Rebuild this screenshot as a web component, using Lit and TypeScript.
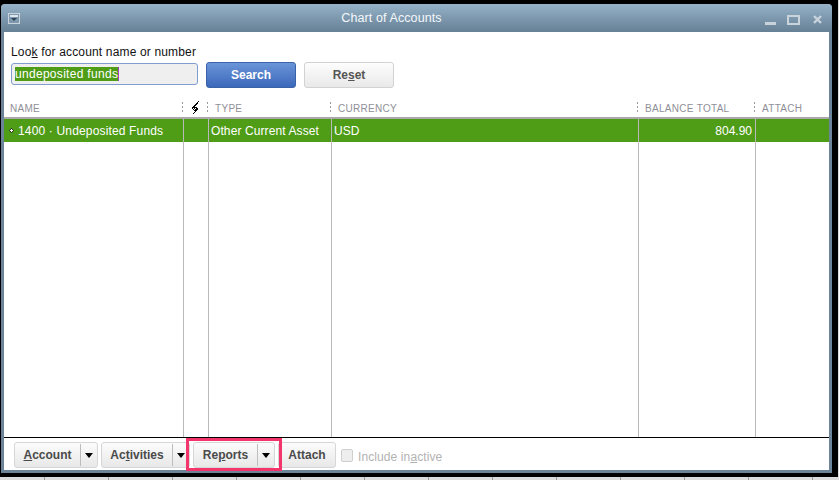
import { LitElement, html, css } from "lit";
import { customElement } from "lit/decorators.js";

@customElement("app-root")
export class AppRoot extends LitElement {
  static styles = css`
    :host { display: block; width: 839px; height: 480px; overflow: hidden; font-family: "Liberation Sans", Arial, sans-serif; }
    * { box-sizing: border-box; }
    .page { width: 839px; height: 480px; padding: 0 1px 3px 0; background-color: #dcdcdc;
      background-image: repeating-linear-gradient(90deg, transparent 0 44px, #9a9a9a 44px 45px, transparent 45px 64px); }
    .black { height: 477px; background: #000; padding: 4px 6px 4px 1px; }
    .win { height: 469px; display: flex; flex-direction: column; background: #6c8499; border-radius: 4px 4px 0 0; padding: 0 3px 3px 3px; }
    .title { height: 28px; flex: none; margin: 0 -3px; padding: 0 8px 0 7px; display: flex; align-items: center; justify-content: space-between;
      background: linear-gradient(#95b2c8, #668095); border-radius: 4px 4px 0 0; color: #fff; position: relative; }
    .title-text { position: absolute; left: 0; right: 0; top: 7px; text-align: center; font-size: 12.5px; line-height: 15px; color: #f4f7fa; padding-right: 50px; letter-spacing: .1px; }
    .sys { display: block; }
    .ctl { display: flex; align-items: center; margin: 3px 2px 0 0; }
    .ctl .min { margin: 8px 11px 0 0; }
    .ctl .max { margin-right: 13px; }
    .content { flex: 1; background: #fff; display: flex; flex-direction: column; min-height: 0; }
    .search { height: 68px; flex: none; padding: 13px 0 0 7px; }
    .label { font-size: 12px; line-height: 15px; color: #111; height: 17px; letter-spacing: .16px; }
    u { text-underline-offset: 1px; }
    .search-row { display: flex; align-items: flex-start; }
    .input { width: 187px; height: 22px; margin-top: 1px; border: 1px solid #7f9dd0; border-radius: 3px; background: #efefef; padding: 3px 3px 0; font-size: 12px; line-height: 14px; letter-spacing: .3px; }
    .sel { background: #4f9c17; color: #fff; display: inline-block; height: 14px; border-right: 1px solid #a040c0; }
    .btn-primary { width: 90px; height: 26px; margin-left: 8px; border: 1px solid #3a62a8; border-radius: 3px; background: linear-gradient(#6a95d8, #3c68bb); color: #fff; font-size: 12px; font-weight: bold; display: flex; align-items: center; justify-content: center; }
    .btn-reset { width: 90px; height: 26px; margin-left: 8px; border: 1px solid #d2d2d2; border-radius: 3px; background: linear-gradient(#fdfdfd, #e9e9e9); color: #555; font-size: 12px; font-weight: bold; display: flex; align-items: center; justify-content: center; }
    .grid { display: grid; grid-template-columns: 180px 25px 123px 307px 117px 74px; }
    .head { height: 19px; flex: none; border-bottom: 2px solid #a9a9a9; font-size: 10px; color: #8f8f98; letter-spacing: .3px; }
    .hc { padding: 2px 0 0 6px; line-height: 14px; position: relative; display: flex; align-items: flex-start; }
    .hc.sep::after { content: ""; position: absolute; right: 1px; top: 2px; width: 1px; height: 11px; background: repeating-linear-gradient(#999 0 2px, transparent 2px 4px); }
    .hc.tight { padding: 1px 0 0 7px; }
    .row { height: 23px; flex: none; background: #4f9c17; color: #fff; font-size: 12px; line-height: 24px; }
    .c { border-right: 1px solid #b9b9b9; padding-left: 2px; white-space: nowrap; overflow: hidden; }
    .c:last-child { border-right: none; }
    .c.name { padding-left: 5px; display: flex; align-items: center; gap: 4px; letter-spacing: .16px; }
    .c.type { letter-spacing: .1px; }
    .c.num { text-align: right; padding-right: 3px; }
    .fill { flex: 1; min-height: 0; border-bottom: 1px solid #000; }
    .foot { height: 32px; flex: none; display: flex; align-items: flex-start; padding: 4px 0 0 10px; position: relative; font-size: 12px; font-weight: bold; color: #4a4a4a; }
    .b { height: 26px; border: 1px solid #d6d6d6; border-radius: 3px; background: linear-gradient(#fcfcfc, #e8e8e8); display: flex; align-items: center; }
    .b .t { flex: 1; text-align: center; }
    .b .d { width: 17px; height: 22px; border-left: 1px solid #bdbdbd; display: flex; align-items: center; justify-content: center; }
    .tri { width: 0; height: 0; border-left: 4px solid transparent; border-right: 4px solid transparent; border-top: 5px solid #000; }
    .acc { width: 84px; margin-right: 3px; }
    .act { width: 89px; margin-right: 3px; }
    .rep { width: 82px; margin-right: 3px; }
    .att { width: 58px; margin-right: 5px; }
    .pink { position: absolute; left: 182px; top: 0; width: 96px; height: 33px; border: 3px solid #f4356b; pointer-events: none; }
    .check { width: 12px; height: 13px; margin-top: 7px; border: 1px solid #cfcfcf; border-radius: 2px; background: #eee; }
    .inactive { margin: 8px 0 0 5px; font-weight: normal; color: #b3b3b3; font-size: 12px; line-height: 14px; letter-spacing: .1px; }
  `;

  render() {
    return html`<div class="page"><div class="black"><div class="win">
      <div class="title">
        <svg class="sys" width="12" height="11" viewBox="0 0 12 11"><rect x=".5" y=".5" width="11" height="10" fill="#7e98ad" stroke="#c9d3db"/><rect x="2" y="2" width="8" height="2" fill="#dfe6eb"/><path d="M3 5h6L6 8z" fill="#2f4557"/></svg>
        <span class="title-text">Chart of Accounts</span>
        <span class="ctl">
          <svg class="min" width="11" height="4" viewBox="0 0 11 4"><rect width="11" height="3" fill="#c9d3db"/></svg>
          <svg class="max" width="13" height="10" viewBox="0 0 13 10"><rect x="1" y="1" width="11" height="8" fill="none" stroke="#c9d3db" stroke-width="2"/></svg>
          <svg width="9" height="9" viewBox="0 0 9 9"><path d="M1 1l7 7M8 1L1 8" stroke="#c9d3db" stroke-width="2.4"/></svg>
        </span>
      </div>
      <div class="content">
        <div class="search">
          <div class="label">Loo<u>k</u> for account name or number</div>
          <div class="search-row">
            <div class="input"><span class="sel">undeposited funds</span></div>
            <div class="btn-primary">Search</div>
            <div class="btn-reset"><span>Re<u>s</u>et</span></div>
          </div>
        </div>
        <div class="head grid">
          <div class="hc sep">NAME</div>
          <div class="hc sep tight"><svg width="9" height="13" viewBox="0 0 9 13" shape-rendering="crispEdges"><path d="M7 0h1v1H7zM6 1h1v1H6zM5 2h2v1H5zM4 3h2v1H4zM3 4h2v1H3zM2 5h2v1H2zM1 6h5v1H1zM1 7h1v1H1zM3 7h1v1H3zM5 7h2v1H5zM2 8h1v1H2zM4 8h3v1H4zM3 9h3v1H3zM4 10h1v1H4zM3 11h1v1H3zM2 12h1v1H2z" fill="#000"/></svg></div>
          <div class="hc sep">TYPE</div>
          <div class="hc sep">CURRENCY</div>
          <div class="hc sep">BALANCE TOTAL</div>
          <div class="hc">ATTACH</div>
        </div>
        <div class="row grid">
          <div class="c name"><svg width="5" height="5" viewBox="0 0 5 5"><path d="M2.500.4L4.600 2.500 2.500 4.600.4 2.500z" fill="#fff" stroke="#111" stroke-width=".9"/></svg><span>1400 · Undeposited Funds</span></div>
          <div class="c"></div>
          <div class="c type">Other Current Asset</div>
          <div class="c">USD</div>
          <div class="c num">804.90</div>
          <div class="c"></div>
        </div>
        <div class="fill grid">
          <div class="c"></div><div class="c"></div><div class="c"></div><div class="c"></div><div class="c"></div><div class="c"></div>
        </div>
        <div class="foot">
          <div class="b acc"><span class="t"><u>A</u>ccount</span><span class="d"><i class="tri"></i></span></div>
          <div class="b act"><span class="t">Ac<u>t</u>ivities</span><span class="d"><i class="tri"></i></span></div>
          <div class="b rep"><span class="t">Re<u>p</u>orts</span><span class="d"><i class="tri"></i></span></div>
          <div class="b att"><span class="t">Attach</span></div>
          <div class="check"></div>
          <div class="inactive">Include in<u>a</u>ctive</div>
          <div class="pink"></div>
        </div>
      </div>
    </div></div></div>`;
  }
}
